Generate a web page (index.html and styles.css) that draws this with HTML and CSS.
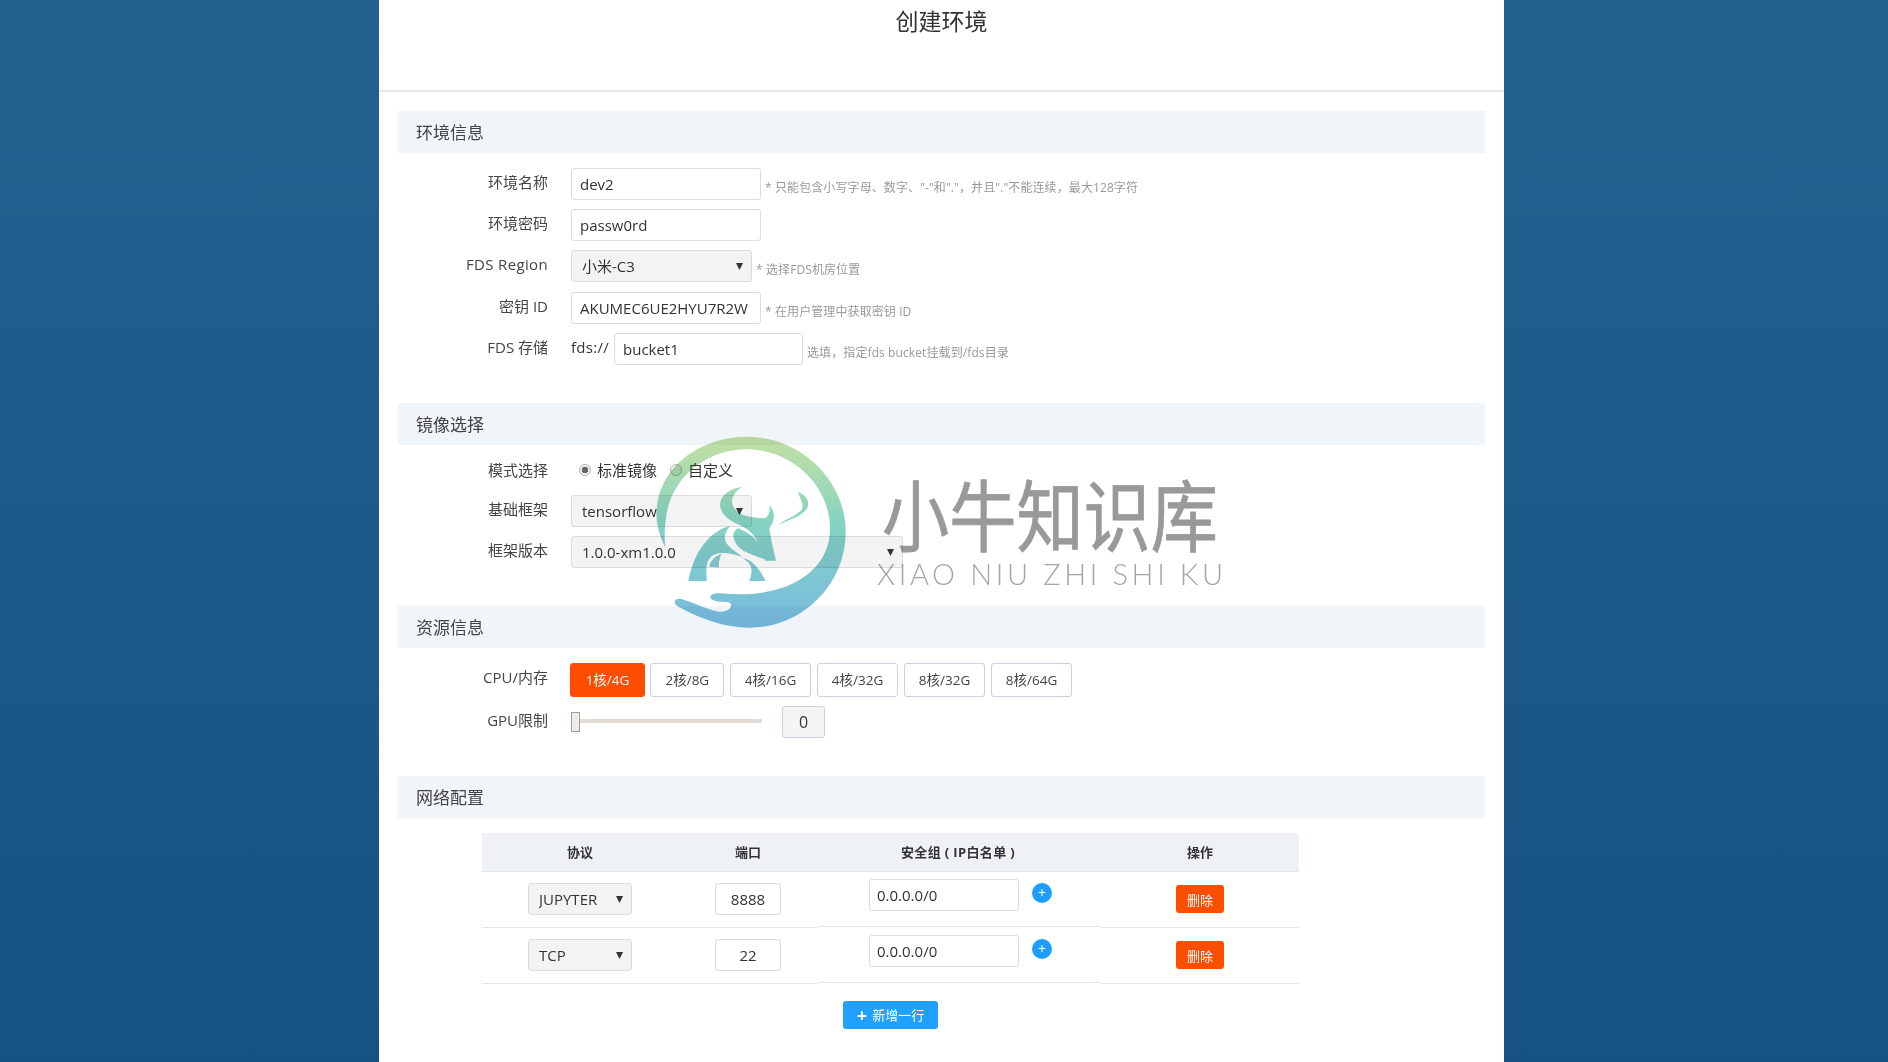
FILE: index.html
```html
<!DOCTYPE html>
<html lang="zh-CN">
<head>
<meta charset="utf-8">
<title>创建环境</title>
<link rel="stylesheet" href="styles.css">
</head>
<body>
<main class="panel">
  <h1 class="title">创建环境</h1>
  <div class="content">
    <section class="section">
      <h2 class="section-head">环境信息</h2>
      <div class="row">
        <label class="label">环境名称</label>
        <input class="field w190" type="text" value="dev2">
        <span class="hint hint-gap">* 只能包含小写字母、数字、"-"和"."，并且"."不能连续，最大128字符</span>
      </div>
      <div class="row">
        <label class="label">环境密码</label>
        <input class="field w190" type="text" value="passw0rd">
      </div>
      <div class="row row-wide">
        <label class="label label-latin">FDS Region</label>
        <select class="picker w181"><option>小米-C3</option></select>
        <span class="hint hint-gap">* 选择FDS机房位置</span>
      </div>
      <div class="row">
        <label class="label">密钥 ID</label>
        <input class="field w190" type="text" value="AKUMEC6UE2HYU7R2W">
        <span class="hint hint-gap">* 在用户管理中获取密钥 ID</span>
      </div>
      <div class="row">
        <label class="label">FDS 存储</label>
        <span class="prefix">fds://</span>
        <input class="field w189" type="text" value="bucket1">
        <span class="hint hint-gap">选填，指定fds bucket挂载到/fds目录</span>
      </div>
    </section>

    <section class="section">
      <h2 class="section-head">镜像选择</h2>
      <div class="row row-radio">
        <label class="label">模式选择</label>
        <span class="radios">
          <span class="radio-item"><input class="radio" type="radio" name="mode" checked>标准镜像</span>
          <span class="radio-item"><input class="radio" type="radio" name="mode">自定义</span>
        </span>
      </div>
      <div class="row">
        <label class="label">基础框架</label>
        <select class="picker w181"><option>tensorflow</option></select>
      </div>
      <div class="row">
        <label class="label">框架版本</label>
        <select class="picker w332"><option>1.0.0-xm1.0.0</option></select>
      </div>
    </section>

    <section class="section">
      <h2 class="section-head">资源信息</h2>
      <div class="row">
        <label class="label">CPU/内存</label>
        <div class="choices">
          <button class="choice choice-on">1核/4G</button>
          <button class="choice">2核/8G</button>
          <button class="choice">4核/16G</button>
          <button class="choice">4核/32G</button>
          <button class="choice">8核/32G</button>
          <button class="choice">8核/64G</button>
        </div>
      </div>
      <div class="row">
        <label class="label">GPU限制</label>
        <input class="slider" type="range" min="0" max="8" value="0">
        <span class="slider-value">0</span>
      </div>
    </section>

    <section class="section">
      <h2 class="section-head">网络配置</h2>
      <div class="net">
        <div class="net-grid">
          <div class="th">协议</div>
          <div class="th">端口</div>
          <div class="th th-wide">安全组 ( IP白名单 )</div>
          <div class="th">操作</div>

          <div class="td"><select class="picker w104"><option>JUPYTER</option></select></div>
          <div class="td"><input class="field port" type="text" value="8888"></div>
          <div class="td td-ip">
            <input class="field ip" type="text" value="0.0.0.0/0">
            <span class="plus">+</span>
          </div>
          <div class="td"><button class="danger">删除</button></div>

          <div class="td"><select class="picker w104"><option>TCP</option></select></div>
          <div class="td"><input class="field port" type="text" value="22"></div>
          <div class="td td-ip td-ip-last">
            <input class="field ip" type="text" value="0.0.0.0/0">
            <span class="plus">+</span>
          </div>
          <div class="td"><button class="danger">删除</button></div>
        </div>
        <button class="add"><span class="add-plus">+</span><span class="add-text">新增一行</span></button>
      </div>
    </section>
  </div>
</main>

<svg class="watermark" viewBox="0 0 600 210" width="600" height="210" aria-label="小牛知识库">
  <defs>
    <linearGradient id="wm" gradientUnits="userSpaceOnUse" x1="0" y1="20" x2="0" y2="593">
      <stop offset="0" stop-color="#c4e0a2"/>
      <stop offset="0.46" stop-color="#84d3c3"/>
      <stop offset="1" stop-color="#78badf"/>
    </linearGradient>
  </defs>
  <g transform="scale(0.33333)" fill="url(#wm)">
    <path d="M46 352C24 310 14 260 22 220C40 100 160 20 290 20C450 20 587 150 587 305C587 470 450 593 300 593C220 593 150 565 85 530C68 520 72 505 90 506C120 512 160 535 205 545C235 548 250 530 240 518C225 515 190 518 182 505C178 492 195 488 215 490C290 498 370 490 430 460C500 425 540 370 540 295C540 170 430 58 290 58C170 58 70 140 50 250C44 290 42 320 46 352Z"/>
    <path d="M276 170C240 176 210 195 210 225C212 250 232 268 262 282C285 292 308 305 322 333L345 392L378 392C370 360 362 325 358 295C374 272 378 248 358 225C362 245 355 262 342 265C322 264 300 262 282 256C252 244 222 208 276 170Z"/>
    <path d="M250 312C255 300 262 295 270 296C290 306 308 318 322 333L360 392C330 384 300 372 280 362C262 350 250 335 250 312Z"/>
    <path d="M240 288C190 300 135 350 115 453L170 453C172 430 160 395 190 375C215 362 250 372 278 380C250 362 225 345 224 322C225 310 232 298 240 288Z"/>
    <path d="M278 385C310 390 330 420 347 453L298 453C305 430 315 405 278 385Z"/>
    <path d="M215 372C195 378 180 392 178 411L207 412C205 400 208 385 215 372Z"/>
    <path d="M443 185C470 195 482 215 470 238C450 262 415 270 385 285C405 268 440 258 456 238C462 222 450 205 443 185Z"/>
  </g>
  <text class="wm-cn" x="232" y="116" textLength="336" lengthAdjust="spacingAndGlyphs">小牛知识库</text>
  <text class="wm-en" x="227" y="155" textLength="346" lengthAdjust="spacing">XIAO NIU ZHI SHI KU</text>
</svg>
</body>
</html>
```

FILE: styles.css
```css
* { box-sizing: border-box; }

html, body {
  margin: 0;
  height: 100%;
}

body {
  background: linear-gradient(180deg, #23628f 0%, #155283 100%);
  font-family: "Open Sans", "Noto Sans CJK SC", sans-serif;
  font-size: 15px;
  color: #333;
  overflow: hidden;
}

.panel {
  width: 1125px;
  height: 1062px;
  margin-left: 379px;
  background: #fff;
}

.title {
  height: 92px;
  margin: 0;
  padding-top: 4px;
  border-bottom: 2px solid #e8e8e8;
  font-size: 23px;
  font-weight: 400;
  line-height: 34px;
  text-align: center;
  color: #333;
}

.content { padding: 19px 19px 0; }

.section { margin-bottom: 38px; }
.section:last-child { margin-bottom: 0; }

.section-head {
  height: 42px;
  margin: 0 0 15px;
  padding-left: 18px;
  background: #f0f5f9;
  font-size: 17px;
  font-weight: 400;
  line-height: 43px;
  color: #444;
}

.row {
  display: flex;
  align-items: flex-start;
  margin-bottom: 9px;
}
.row:last-child { margin-bottom: 0; }
.row-wide { margin-bottom: 10px; }
.row-radio { height: 24px; margin-top: -2px; margin-bottom: 13px; }

.label {
  flex: none;
  width: 150px;
  margin-right: 23px;
  font-size: 15px;
  line-height: 28px;
  text-align: right;
  color: #444;
}
.label-latin { letter-spacing: 0.35px; }
.row-radio .label { line-height: 24px; }

.field, .picker {
  height: 32px;
  border: 1px solid #dcdcdc;
  border-radius: 3px;
  font-family: inherit;
  font-size: 15px;
  color: #333;
}

.field {
  padding: 0 6px 0 8px;
  background: #fff;
}

.picker {
  padding: 0 20px 0 10px;
  background-color: #f3f3f3;
  background-image: url("data:image/svg+xml,%3Csvg xmlns='http://www.w3.org/2000/svg' width='7' height='7'%3E%3Cpath d='M0 0h7L3.5 7z' fill='%23333'/%3E%3C/svg%3E");
  background-repeat: no-repeat;
  background-position: right 8px center;
  appearance: none;
  -webkit-appearance: none;
}

.w190 { width: 190px; }
.w189 { width: 189px; }
.w181 { width: 181px; }
.w332 { width: 332px; }
.w104 { width: 104px; }

.hint {
  margin-top: 11px;
  font-size: 12px;
  letter-spacing: 0.1px;
  line-height: 18px;
  color: #999;
}
.hint-gap { margin-left: 4px; }

.prefix {
  width: 43px;
  letter-spacing: 0.3px;
  line-height: 28px;
}

.radios {
  display: flex;
  gap: 13px;
  padding-left: 8px;
  line-height: 24px;
}
.radio-item { display: flex; align-items: center; }

.radio {
  width: 12px;
  height: 12px;
  margin: 0 6px 0 0;
  border: 1px solid #b5b5b5;
  border-radius: 50%;
  background: #efefef;
  appearance: none;
  -webkit-appearance: none;
}
.radio:checked {
  background: radial-gradient(circle, #666 0 3px, #efefef 3.5px);
}

.choices {
  display: flex;
  gap: 5.4px;
  margin-left: -1px;
}

.choice {
  height: 34px;
  padding: 0 14.1px 2px;
  border: 1px solid #c8d3e0;
  border-radius: 3px;
  background: #fff;
  font-family: inherit;
  font-size: 13.5px;
  color: #444;
}
.choice-on {
  min-width: 75px;
  border-color: #ff4d00;
  background: #ff4d00;
  color: #fff;
}

.slider {
  width: 191px;
  height: 30px;
  margin: 0 20px 0 0;
  background: transparent;
  appearance: none;
  -webkit-appearance: none;
}
.slider::-webkit-slider-runnable-track {
  height: 4px;
  background: #e2dcd6;
}
.slider::-webkit-slider-thumb {
  width: 9px;
  height: 20px;
  margin-top: -7px;
  border: 1px solid #a39d97;
  background: #efebe7;
  -webkit-appearance: none;
}

.slider-value {
  width: 43px;
  height: 32px;
  border: 1px solid #c8d3e0;
  border-radius: 3px;
  background: #f5f5f5;
  font-size: 16px;
  line-height: 30px;
  text-align: center;
}

.net {
  display: flex;
  flex-direction: column;
  align-items: center;
  margin-left: 84px;
  width: 817px;
}

.net-grid {
  display: grid;
  grid-template-columns: 196px 140px 283px 198px;
  grid-auto-rows: auto;
  width: 100%;
}

.th {
  height: 39px;
  border-bottom: 1px solid #dfe5ea;
  background: #eef1f5;
  font-size: 13px;
  font-weight: 700;
  line-height: 38px;
  text-align: center;
}
.th-wide { padding-right: 3px; letter-spacing: 0.35px; }

.td {
  display: flex;
  align-items: center;
  justify-content: center;
  height: 56px;
  padding-bottom: 1px;
  border-bottom: 1px solid #e4e7ea;
}

.td-ip {
  align-items: flex-start;
  justify-content: flex-start;
  height: 55px;
  padding: 7px 0 0 51px;
}
.td-ip-last { border-bottom-color: #dde3e9; }

.port {
  width: 66px;
  padding: 0;
  text-align: center;
}

.ip { width: 150px; padding-left: 7px; }

.plus {
  width: 20px;
  height: 20px;
  margin: 4px 0 0 13px;
  border-radius: 50%;
  background: #1e9fff;
  font-size: 14px;
  line-height: 19px;
  text-align: center;
  color: #fff;
}

.danger {
  width: 48px;
  height: 28px;
  padding: 0;
  border: 0;
  border-radius: 3px;
  background: #ff4d00;
  font-family: inherit;
  font-size: 13px;
  color: #fff;
}

.add {
  display: flex;
  align-items: center;
  justify-content: center;
  width: 95px;
  height: 28px;
  margin-top: 17px;
  padding: 0;
  border: 0;
  border-radius: 3px;
  background: #20a0ff;
  font-family: inherit;
  font-size: 13px;
  color: #fff;
}
.add-plus {
  margin-right: 5px;
  font-size: 18px;
  font-weight: 700;
  line-height: 24px;
}
.add-text { margin-top: -2px; }

.watermark {
  position: absolute;
  left: 650px;
  top: 430px;
  mix-blend-mode: multiply;
  pointer-events: none;
}

.wm-cn {
  font-family: "Noto Sans CJK SC", sans-serif;
  font-size: 78px;
  fill: #999;
  stroke: #999;
  stroke-width: 0.8px;
  stroke-linejoin: round;
}

.wm-en {
  font-family: "Lato", sans-serif;
  font-size: 29px;
  font-weight: 300;
  fill: #a5a5a5;
}
```
